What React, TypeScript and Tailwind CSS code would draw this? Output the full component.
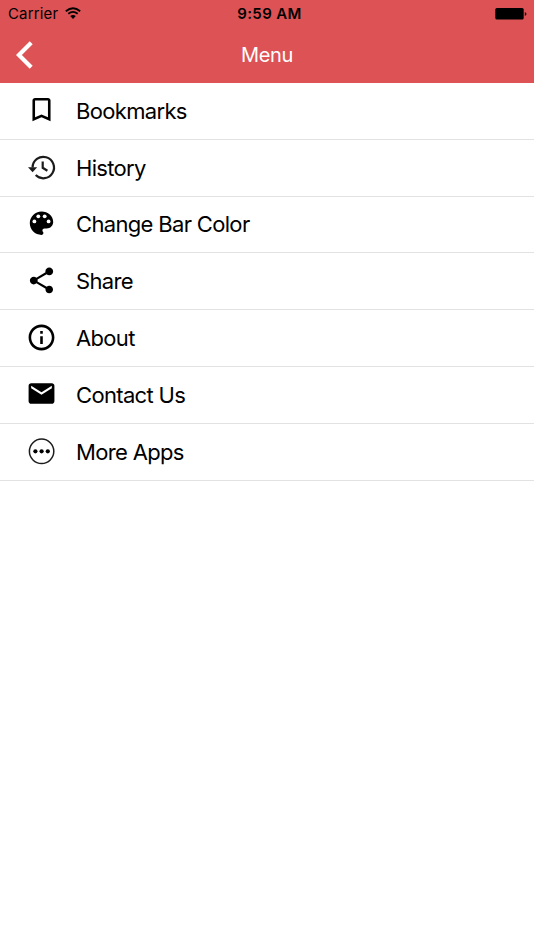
import type { ReactNode } from 'react'
import { MdBookmarkBorder, MdEmail, MdInfoOutline, MdShare } from 'react-icons/md'

const HistoryIcon = () => (
	<svg viewBox="0 0 32 32" className="w-8 h-8">
		<path
			d="M6.6 16.4A10.7 10.7 0 1 1 9.7 24.1M16.7 10.6V16.8L21.4 19.7"
			fill="none"
			stroke="#1c1c1c"
			strokeWidth="2.2"
		/>
		<path d="M2 16.2H11.2L6.6 21.2z" fill="#1c1c1c" />
	</svg>
)

const PaletteIcon = () => (
	<svg viewBox="0 0 32 32" className="w-8 h-8">
		<g transform="translate(-0.8 0.4)">
			<path d="M16.3 4.2C9.9 4.2 4.6 9.4 4.6 15.9S9.9 27.5 16.3 27.5C17.4 27.5 18.2 26.7 18.2 25.6C18.2 25.1 18 24.6 17.7 24.3C17.4 24 17.2 23.5 17.2 23C17.2 21.9 18.1 21.1 19.2 21.1H21.5C25.1 21.1 28 18.2 28 14.6C28 8.9 22.8 4.2 16.3 4.2z" />
			<g fill="white">
				<circle cx="9.2" cy="14" r="1.9" />
				<circle cx="13.1" cy="8.9" r="1.9" />
				<circle cx="19.5" cy="8.9" r="1.9" />
				<circle cx="23.4" cy="14" r="1.9" />
			</g>
		</g>
	</svg>
)

const MoreIcon = () => (
	<svg viewBox="0 0 28 28" className="w-7 h-7">
		<g transform="translate(-0.4 0.3)">
			<circle cx="14" cy="14" r="12.2" fill="none" stroke="#1c1c1c" strokeWidth="1.5" />
			<circle cx="7.8" cy="14" r="2.1" />
			<circle cx="14" cy="14" r="2.1" />
			<circle cx="20.2" cy="14" r="2.1" />
		</g>
	</svg>
)

const items: { label: string; icon: ReactNode }[] = [
	{ label: 'Bookmarks', icon: <MdBookmarkBorder size={31} /> },
	{ label: 'History', icon: <HistoryIcon /> },
	{ label: 'Change Bar Color', icon: <PaletteIcon /> },
	{ label: 'Share', icon: <MdShare size={31} /> },
	{ label: 'About', icon: <MdInfoOutline size={31} /> },
	{ label: 'Contact Us', icon: <MdEmail size={31} /> },
	{ label: 'More Apps', icon: <MoreIcon /> }
]

function StatusBar() {
	return (
		<div className="grid grid-cols-3 items-center h-7 pl-2 pr-[7px] text-[15px] text-black">
			<div className="flex items-center gap-[7px]">
				<span className="tracking-[0.15px]">Carrier</span>
				<svg viewBox="0 0 16 12" className="w-4 h-3 -mt-0.5">
					<path
						d="M0.8 4.2Q8-1.8 15.2 4.2M3.3 6.8Q8 3 12.7 6.8"
						fill="none"
						stroke="currentColor"
						strokeWidth="1.8"
					/>
					<path d="M5.2 9.1Q8 6.8 10.8 9.1L8 11.9z" />
				</svg>
			</div>
			<span className="pl-1 text-center font-semibold tracking-[0.35px]">9:59 AM</span>
			<svg viewBox="0 0 32 12" className="w-8 h-3 justify-self-end">
				<rect x="0.3" width="28.4" height="11.6" rx="1.5" />
				<path d="M29.8 4q3.4 2 0 4z" />
			</svg>
		</div>
	)
}

export default function App() {
	return (
		<div className="min-h-screen bg-white font-['Inter',sans-serif] text-black">
			<header className="h-[83px] bg-[#dd5355]">
				<StatusBar />
				<nav className="grid grid-cols-3 items-center h-[53px] px-4 text-white">
					<button aria-label="Back">
						<svg viewBox="0 0 18 28" className="w-[18px] h-7">
							<path d="M15.2 1.8L2.9 14L15.2 26.2" fill="none" stroke="currentColor" strokeWidth="4.2" />
						</svg>
					</button>
					<h1 className="text-center text-xl tracking-[-0.4px]">Menu</h1>
				</nav>
			</header>
			<ul>
				{items.map(({ label, icon }) => (
					<li key={label} className="flex items-center h-[56.8px] border-b border-[#e2e2e2]">
						<span className="flex items-center justify-center w-[83px] -mr-[7px] pb-[2px]">{icon}</span>
						<span className="pt-px text-[22px] tracking-[-0.67px]">{label}</span>
					</li>
				))}
			</ul>
		</div>
	)
}
